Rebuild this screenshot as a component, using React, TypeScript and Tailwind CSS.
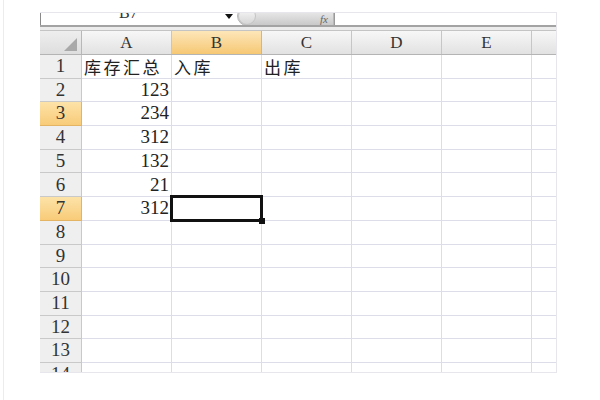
import React from 'react'

const serif = { fontFamily: '"Liberation Serif", "Noto Sans CJK SC", serif' }
const cjk = { fontFamily: '"Noto Sans CJK SC", "Liberation Serif", sans-serif' }

const cols = ['A', 'B', 'C', 'D', 'E']

// 表格数据：第一列是库存汇总
const data: string[][] = [
  ['库存汇总', '入库', '出库'],
  ['123'],
  ['234'],
  ['312'],
  ['132'],
  ['21'],
  ['312'],
  [],
  [],
  [],
  [],
  [],
  [],
  [],
]

function FormulaBar() {
  return (
    <div className="flex h-[14px] shrink-0 overflow-hidden border-b-2 border-[#a3a3a3] bg-white">
      <div className="relative flex w-[197px] border-l border-[#8a8a8a]">
        <span className="ml-[78px] mt-[-8px] text-[16px] leading-[16px] text-[#333]" style={serif}>
          B7
        </span>
        <svg className="absolute left-[184px] top-[1px]" width="8" height="6" viewBox="0 0 8 6">
          <polygon points="0,0 8,0 4,5" fill="#111" />
        </svg>
      </div>
      <div className="flex w-[98px] items-start border-r border-[#9a9a9a]">
        <div className="relative flex h-[20px] w-full mt-[-7px] rounded-l-full border border-[#b8b8b8] bg-linear-to-b from-[#f4f4f4] to-[#c9c9c9]">
          <div className="h-[18px] w-[18px] rounded-full border border-[#c4c4c4] bg-linear-to-b from-[#fafafa] to-[#d6d6d6]" />
          <span className="ml-auto mr-[5px] mt-[7px] text-[11px] italic leading-[11px] text-[#666]" style={serif}>
            fx
          </span>
        </div>
      </div>
      <div className="flex-1 bg-white" />
    </div>
  )
}

function HeaderRow() {
  return (
    <div className="flex h-[24px] shrink-0 border-b border-[#b4b4b4]">
      <div className="relative w-[42px] shrink-0 border-r border-[#b8b8b8] bg-linear-to-b from-[#eeeeee] to-[#dedede]">
        <svg className="absolute left-[24px] top-[7px]" width="13" height="13" viewBox="0 0 13 13">
          <polygon points="0,13 13,0 13,13" fill="#a9a9a9" />
        </svg>
      </div>
      {cols.map((c) => (
        <div
          key={c}
          className={
            c === 'B'
              ? 'flex w-[90px] shrink-0 items-center justify-center border-r border-[#e0b56a] bg-linear-to-b from-[#fde6b8] to-[#f6c873] text-[17px] text-[#333]'
              : 'flex w-[90px] shrink-0 items-center justify-center border-r border-[#c6c6c6] bg-linear-to-b from-[#f7f7f7] to-[#e2e2e2] text-[17px] text-[#333]'
          }
          style={serif}
        >
          {c}
        </div>
      ))}
      <div className="flex-1 bg-linear-to-b from-[#f7f7f7] to-[#e2e2e2]" />
    </div>
  )
}

function Cell({ value, selected }: { value?: string; selected?: boolean }) {
  const isNum = value !== undefined && /^\d+$/.test(value)
  return (
    <div
      className={
        isNum
          ? 'relative flex w-[90px] shrink-0 items-center justify-end border-r border-b border-[#dcdde8] pr-[2px] text-[19px] text-[#222]'
          : 'relative flex w-[90px] shrink-0 items-center border-r border-b border-[#dcdde8] pl-[2px] text-[17px] tracking-[2.5px] text-[#222]'
      }
      style={isNum ? serif : cjk}
    >
      {value}
      {selected && (
        <div className="absolute -left-[2px] -top-[2px] -right-[2px] -bottom-[2px] z-10 border-[3px] border-[#111]">
          <div className="absolute -right-[5px] -bottom-[5px] h-[6px] w-[6px] bg-[#111]" />
        </div>
      )}
    </div>
  )
}

export default function App() {
  return (
    <div className="flex h-[400px] w-[600px] overflow-hidden bg-white">
      <div className="w-[3px] shrink-0" />
      <div className="flex-1 border-l border-[#ececec] pl-[36px] pt-[12px]">
        <div className="flex h-[361px] w-[517px] flex-col overflow-hidden border-t border-r border-b border-[#e6e6ec]">
          <FormulaBar />
          <div className="h-[4px] shrink-0 border-b border-[#c4c4c4] bg-[#ececec]" />
          <HeaderRow />
          {data.map((row, i) => {
            const n = i + 1
            const hl = n === 3 || n === 7
            return (
              <div key={n} className="flex h-[23.7px] shrink-0">
                <div
                  className={
                    hl
                      ? 'flex w-[42px] shrink-0 items-center justify-center border-r border-b border-[#e2b463] bg-linear-to-b from-[#fde3a8] to-[#f8cb78] text-[19px] text-[#333]'
                      : 'flex w-[42px] shrink-0 items-center justify-center border-r border-b border-[#c9c9c9] bg-[#efefef] text-[19px] text-[#333]'
                  }
                  style={serif}
                >
                  {n}
                </div>
                {cols.map((c, j) => (
                  <Cell key={c} value={row[j]} selected={n === 7 && c === 'B'} />
                ))}
                <div className="flex-1 border-b border-[#dcdde8]" />
              </div>
            )
          })}
        </div>
      </div>
    </div>
  )
}
